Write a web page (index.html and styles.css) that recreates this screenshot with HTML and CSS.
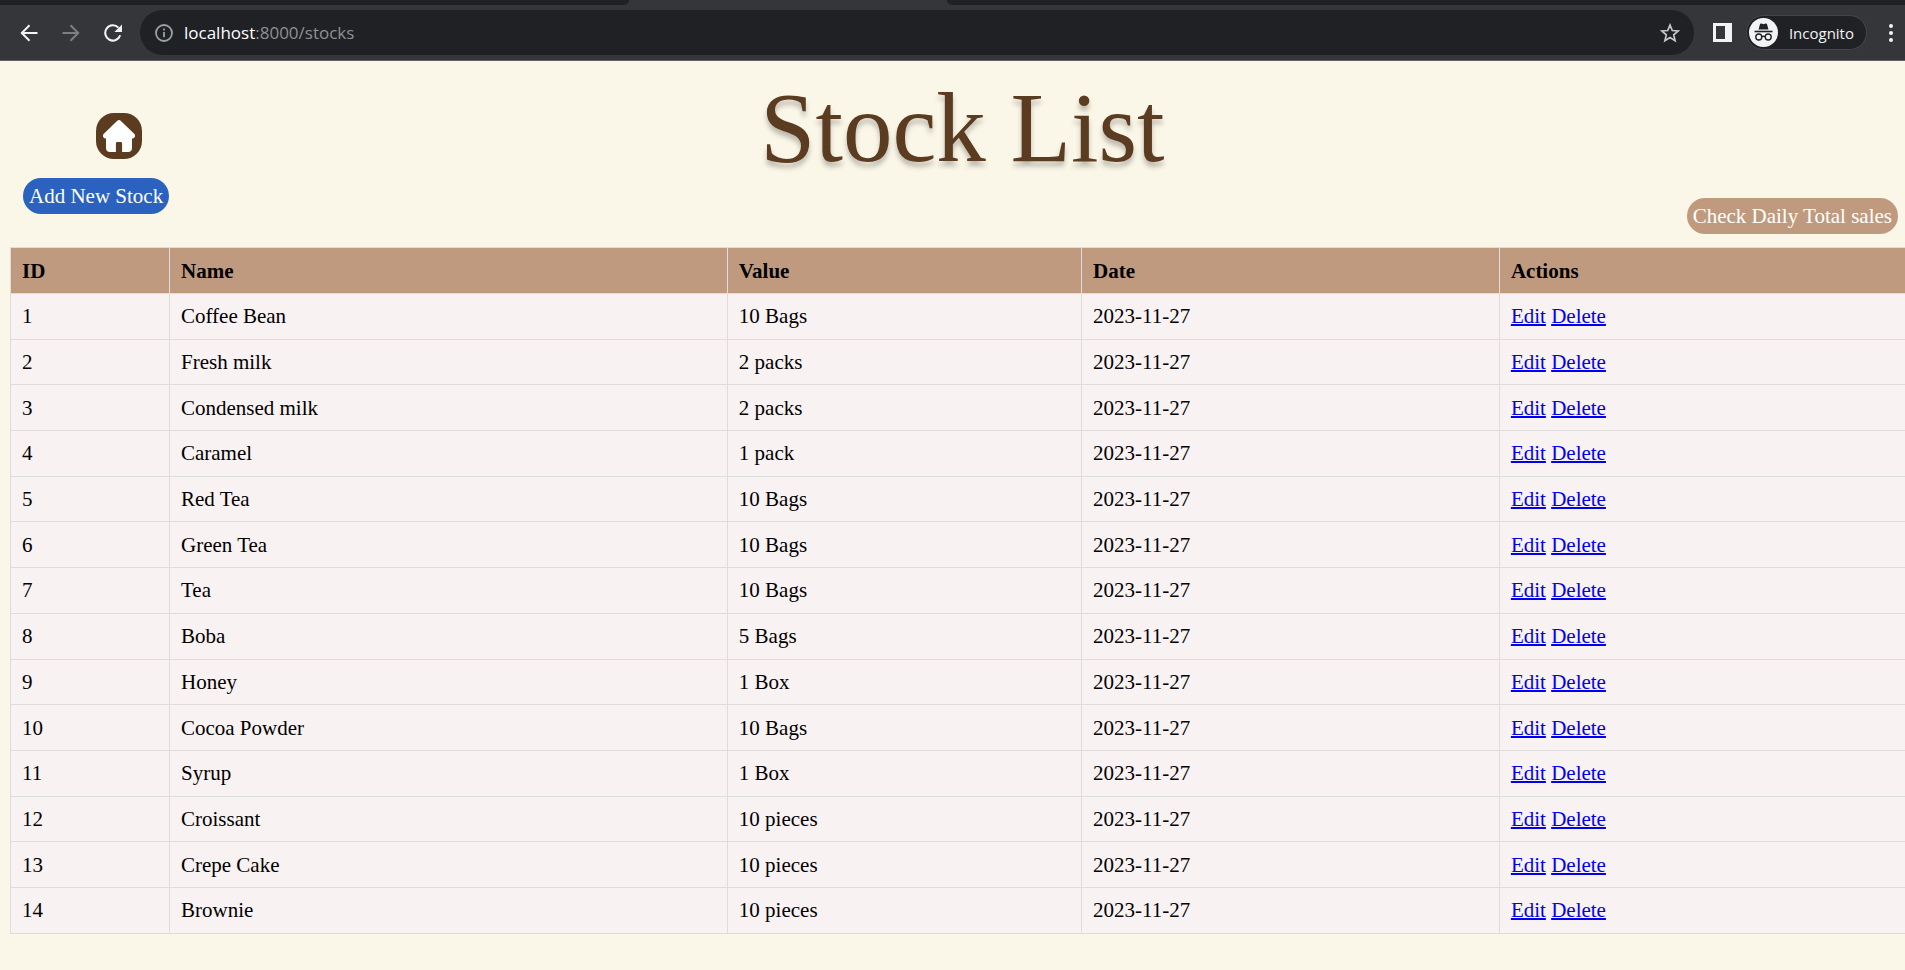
FILE: index.html
```html
<!DOCTYPE html>
<html lang="en">
<head>
<meta charset="utf-8">
<title>Stock List</title>
<link rel="stylesheet" href="styles.css">
</head>
<body>
<div class="browser">
  <div class="tabstrip"><div class="tab-before"></div><div class="tab-after"></div></div>
  <div class="toolbar">
    <button class="tool" aria-label="Back"><svg width="18" height="18" viewBox="0 0 18 18" fill="none" stroke="#f1f3f4" stroke-width="2"><path d="M17.500 9H2M9.500 1.300 1.800 9l7.700 7.700"/></svg></button>
    <button class="tool" aria-label="Forward"><svg width="18" height="18" viewBox="0 0 18 18" fill="none" stroke="#7d7e82" stroke-width="2"><path d="M.5 9H16M8.500 1.300 16.200 9l-7.700 7.700"/></svg></button>
    <button class="tool" aria-label="Reload"><svg width="18" height="18" viewBox="0 0 20 20" fill="none"><path d="M18 12.500A8.500 8.500 0 1 1 16 4" stroke="#f1f3f4" stroke-width="2.300"/><path d="M20 .5v8.500h-8.500z" fill="#f1f3f4"/></svg></button>
    <div class="omnibox">
      <svg width="18" height="18" viewBox="0 0 18 18" fill="none" stroke="#9aa0a6" stroke-width="1.800"><circle cx="9" cy="9" r="8"/><path d="M9 8v5.200M9 4.600v2"/></svg>
      <span class="url"><span class="host">localhost</span>:8000/stocks</span>
      <button class="star" aria-label="Bookmark"><svg width="20" height="20" viewBox="0 0 20 20" fill="none" stroke="#c4c7ca" stroke-width="1.700"><path d="m10 2 2.300 5.500 5.900.5-4.500 3.900 1.400 5.800L10 14.600l-5.100 3.100 1.400-5.800L1.800 8l5.900-.5z"/></svg></button>
    </div>
    <button class="panel" aria-label="Side panel"><svg width="19" height="19" viewBox="0 0 19 19"><path d="M0 0h19v19H0z" fill="#f1f3f4"/><path d="M3 3h9v13H3z" fill="#35363a"/></svg></button>
    <button class="profile"><svg width="29" height="29" viewBox="0 0 29 29" fill="none"><circle cx="14.500" cy="14.500" r="14.500" fill="#f1f3f4"/><path d="M9.500 11.500 11 6.200c.2-.7.8-.8 1.400-.6l2.100.6 2.100-.6c.6-.2 1.200-.1 1.400.6l1.500 5.300z" fill="#202124"/><path d="M5.500 13.500h18" stroke="#202124" stroke-width="1.600"/><g stroke="#202124" stroke-width="1.400"><circle cx="9.800" cy="19" r="3"/><circle cx="19.200" cy="19" r="3"/><path d="M12.800 18.800q1.700-1.200 3.400 0"/></g></svg><span>Incognito</span></button>
    <button class="menu" aria-label="Menu"><svg width="4" height="18" viewBox="0 0 4 18" fill="#f1f3f4"><circle cx="2" cy="2" r="2"/><circle cx="2" cy="9" r="2"/><circle cx="2" cy="16" r="2"/></svg></button>
  </div>
</div>
<main class="page">
  <header class="heading">
    <div class="left">
      <a class="home" href="#" aria-label="Home"><svg width="32" height="32" viewBox="0 0 32 32" fill="#fff"><path d="M14.300.7q1.700-1.400 3.400 0L31.400 14Q32.600 15.500 31.600 17.200 31 18.400 29 18.400v9.600q0 4-4 4h-5.900v-8.600q0-1.400-1.400-1.400h-3.400q-1.400 0-1.400 1.400V32H7q-4 0-4-4v-9.600Q1 18.400.4 17.200-.6 15.500.6 14z"/></svg></a>
      <a class="pill add" href="#">Add New Stock</a>
    </div>
    <h1 class="title">Stock List</h1>
    <a class="pill sales" href="#">Check Daily Total sales</a>
  </header>
  <table class="stocks">
    <thead><tr><th class="c-id">ID</th><th class="c-name">Name</th><th class="c-value">Value</th><th class="c-date">Date</th><th>Actions</th></tr></thead>
    <tbody>
      <tr><td>1</td><td>Coffee Bean</td><td>10 Bags</td><td>2023-11-27</td><td><a href="#">Edit</a> <a href="#">Delete</a></td></tr>
      <tr><td>2</td><td>Fresh milk</td><td>2 packs</td><td>2023-11-27</td><td><a href="#">Edit</a> <a href="#">Delete</a></td></tr>
      <tr><td>3</td><td>Condensed milk</td><td>2 packs</td><td>2023-11-27</td><td><a href="#">Edit</a> <a href="#">Delete</a></td></tr>
      <tr><td>4</td><td>Caramel</td><td>1 pack</td><td>2023-11-27</td><td><a href="#">Edit</a> <a href="#">Delete</a></td></tr>
      <tr><td>5</td><td>Red Tea</td><td>10 Bags</td><td>2023-11-27</td><td><a href="#">Edit</a> <a href="#">Delete</a></td></tr>
      <tr><td>6</td><td>Green Tea</td><td>10 Bags</td><td>2023-11-27</td><td><a href="#">Edit</a> <a href="#">Delete</a></td></tr>
      <tr><td>7</td><td>Tea</td><td>10 Bags</td><td>2023-11-27</td><td><a href="#">Edit</a> <a href="#">Delete</a></td></tr>
      <tr><td>8</td><td>Boba</td><td>5 Bags</td><td>2023-11-27</td><td><a href="#">Edit</a> <a href="#">Delete</a></td></tr>
      <tr><td>9</td><td>Honey</td><td>1 Box</td><td>2023-11-27</td><td><a href="#">Edit</a> <a href="#">Delete</a></td></tr>
      <tr><td>10</td><td>Cocoa Powder</td><td>10 Bags</td><td>2023-11-27</td><td><a href="#">Edit</a> <a href="#">Delete</a></td></tr>
      <tr><td>11</td><td>Syrup</td><td>1 Box</td><td>2023-11-27</td><td><a href="#">Edit</a> <a href="#">Delete</a></td></tr>
      <tr><td>12</td><td>Croissant</td><td>10 pieces</td><td>2023-11-27</td><td><a href="#">Edit</a> <a href="#">Delete</a></td></tr>
      <tr><td>13</td><td>Crepe Cake</td><td>10 pieces</td><td>2023-11-27</td><td><a href="#">Edit</a> <a href="#">Delete</a></td></tr>
      <tr><td>14</td><td>Brownie</td><td>10 pieces</td><td>2023-11-27</td><td><a href="#">Edit</a> <a href="#">Delete</a></td></tr>
    </tbody>
  </table>
</main>
</body>
</html>
```
FILE: styles.css
```css
* { box-sizing: border-box; }

body {
  margin: 0;
  overflow-x: hidden;
  background: #fbf7e8;
  color: #000;
  font: 21px/24px "Liberation Serif", "Times New Roman", serif;
}

button {
  padding: 0;
  border: 0;
  background: none;
  font: inherit;
  color: inherit;
}

svg { display: block; flex: none; }

/* Browser bar */
.browser {
  background: #35363a;
  border-bottom: 1px solid #5f6165;
  font: 17px/24px "Open Sans", "Noto Sans", sans-serif;
}

.tabstrip { display: flex; justify-content: space-between; height: 5px; }
.tab-before { width: 33%; background: #202124; border-bottom-right-radius: 5px; }
.tab-after { width: 50.300%; background: #202124; border-bottom-left-radius: 5px; }

.toolbar {
  display: flex;
  align-items: center;
  height: 55px;
  padding: 0 12px 0 20px;
}

.tool { width: 18px; margin-right: 24px; }

.omnibox {
  display: flex;
  flex: 1;
  align-items: center;
  gap: 11px;
  height: 45px;
  margin-left: -6px;
  padding: 0 14px 0 15px;
  border-radius: 23px;
  background: #202124;
}

.url { flex: 1; color: #8e9094; }
.host { color: #fff; }
.panel { margin-left: 19px; }

.profile {
  display: flex;
  align-items: center;
  gap: 11px;
  height: 35px;
  margin: 0 22px 0 14px;
  padding: 0 12px 0 2px;
  border: 1px solid #45464a;
  border-radius: 18px;
  background: #202124;
  color: #f1f3f4;
  font-size: 15px;
}

/* Page */
.page { width: 100%; margin-left: 10px; }

.heading {
  display: grid;
  grid-template-columns: 1fr auto 1fr;
  height: 186px;
  padding: 0 13px;
}

.left {
  display: flex;
  flex-direction: column;
  justify-self: start;
  gap: 19px;
  padding-top: 52px;
}

.home {
  display: grid;
  place-items: center;
  width: 46px;
  height: 46px;
  margin-left: 50%;
  border-radius: 18px;
  background: #5c3c20;
}

.pill {
  padding: 6px;
  border-radius: 18px;
  color: #fff;
  text-decoration: none;
  white-space: nowrap;
}

.add { background: #2b62c0; }

.sales {
  place-self: end;
  margin: 0 4px 13px 0;
  background: #c09a7e;
}

.title {
  margin: 8px 0 0;
  color: #5c3c20;
  font-size: 99px;
  font-weight: 400;
  line-height: 118px;
  text-shadow: 0 5px 5px rgba(0, 0, 0, 0.25);
}

/* Row heights share out the table's minimum height */
.stocks {
  width: 100%;
  height: 70.800vh;
  table-layout: fixed;
  border-collapse: collapse;
  background: #f8f2f2;
}

.stocks th,
.stocks td {
  padding: 10px 11px;
  border: 1px solid #ddd;
  text-align: left;
}

.stocks th { background: #c09a7e; }
.stocks a { color: #00e; text-decoration-thickness: 2px; }
.stocks thead tr { height: 46px; }

.c-id { width: 8.350%; }
.c-name { width: 29.300%; }
.c-value { width: 18.600%; }
.c-date { width: 21.950%; }
```
